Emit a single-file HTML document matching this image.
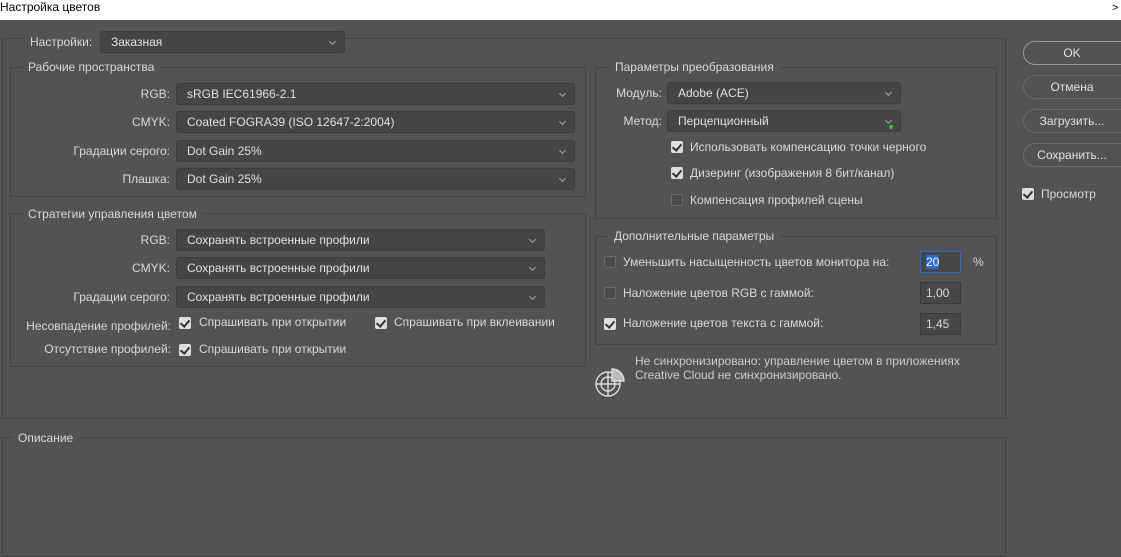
<!DOCTYPE html>
<html><head><meta charset="utf-8"><style>
*{box-sizing:border-box;margin:0;padding:0}
body{width:1121px;height:544px;background:#535353;position:relative;overflow:hidden;font-family:"Liberation Sans","DejaVu Sans",sans-serif;font-size:12px;color:#d8d8d8}
.a{position:absolute;white-space:nowrap}
.tb{position:absolute;left:0;top:0;width:1121px;height:20px;background:#fff;color:#000;font-size:12px;line-height:14px;padding-left:0}
.g{position:absolute;border:1px solid #444}
.gt{position:absolute;background:#535353;padding:0 6px;line-height:14px}
.dd{position:absolute;height:22px;background:#454545;border:1px solid #3c3c3c;border-radius:3px;line-height:20px;padding-left:10px;color:#e0e0e0}
.dd:after{content:"";position:absolute;right:9px;top:7px;width:4px;height:4px;border-right:1px solid #aaa;border-bottom:1px solid #aaa;transform:rotate(45deg)}
.lb{position:absolute;text-align:right;line-height:14px}
.cb{position:absolute;width:12px;height:12px;border-radius:2px;background:#ddd}
.cb:after{content:"";position:absolute;left:3px;top:1px;width:4px;height:7px;border-right:2px solid #333;border-bottom:2px solid #333;transform:rotate(40deg)}
.cb.o{background:#4a4a4a;border:1px solid #6a6a6a}
.cb.o:after{display:none}
.in{position:absolute;width:41px;height:22px;background:#474747;border:1px solid #3a3a3a;line-height:20px;padding-left:5px}
.bt{position:absolute;left:1023px;width:110px;height:24px;border:1px solid #6c6c6c;border-radius:12px;text-align:center;line-height:22px;padding-right:12px;color:#e0e0e0}
</style></head><body>
<div class="tb">Настройка цветов</div>
<div class="a" style="left:1112px;top:2px;color:#000;font-size:11px">&gt;</div>

<div class="g" style="left:2px;top:38px;width:1004px;height:381px"></div>
<div class="gt" style="left:24px;top:32px;width:321px;height:22px"></div>
<div class="a" style="left:30px;top:35px">Настройки:</div>
<div class="dd" style="left:100px;top:31px;width:245px">Заказная</div>

<div class="g" style="left:10px;top:67px;width:576px;height:130px"></div>
<div class="gt" style="left:22px;top:60px">Рабочие пространства</div>
<div class="lb" style="left:60px;width:110px;top:87px">RGB:</div>
<div class="dd" style="left:176px;top:83px;width:399px">sRGB IEC61966-2.1</div>
<div class="lb" style="left:60px;width:110px;top:115px">CMYK:</div>
<div class="dd" style="left:176px;top:111px;width:399px">Coated FOGRA39 (ISO 12647-2:2004)</div>
<div class="lb" style="left:40px;width:130px;top:144px">Градации серого:</div>
<div class="dd" style="left:176px;top:140px;width:399px">Dot Gain 25%</div>
<div class="lb" style="left:60px;width:110px;top:172px">Плашка:</div>
<div class="dd" style="left:176px;top:168px;width:399px">Dot Gain 25%</div>

<div class="g" style="left:10px;top:213px;width:576px;height:154px"></div>
<div class="gt" style="left:22px;top:207px">Стратегии управления цветом</div>
<div class="lb" style="left:40px;width:130px;top:233px">RGB:</div>
<div class="dd" style="left:176px;top:229px;width:369px">Сохранять встроенные профили</div>
<div class="lb" style="left:40px;width:130px;top:261px">CMYK:</div>
<div class="dd" style="left:176px;top:257px;width:369px">Сохранять встроенные профили</div>
<div class="lb" style="left:40px;width:130px;top:290px">Градации серого:</div>
<div class="dd" style="left:176px;top:286px;width:369px">Сохранять встроенные профили</div>
<div class="lb" style="left:0px;width:171px;top:319px">Несовпадение профилей:</div>
<div class="cb" style="left:179px;top:317px"></div>
<div class="a" style="left:199px;top:315px">Спрашивать при открытии</div>
<div class="cb" style="left:375px;top:317px"></div>
<div class="a" style="left:394px;top:315px">Спрашивать при вклеивании</div>
<div class="lb" style="left:0px;width:171px;top:342px">Отсутствие профилей:</div>
<div class="cb" style="left:179px;top:344px"></div>
<div class="a" style="left:199px;top:342px">Спрашивать при открытии</div>

<div class="g" style="left:595px;top:67px;width:402px;height:152px"></div>
<div class="gt" style="left:609px;top:60px">Параметры преобразования</div>
<div class="lb" style="left:600px;width:62px;top:86px">Модуль:</div>
<div class="dd" style="left:667px;top:82px;width:234px">Adobe (ACE)</div>
<div class="lb" style="left:600px;width:62px;top:114px">Метод:</div>
<div class="dd" style="left:667px;top:110px;width:234px">Перцепционный</div>
<div class="a" style="left:889px;top:125px;width:4px;height:4px;background:#3c3;border-radius:2px"></div>
<div class="cb" style="left:671px;top:141px"></div>
<div class="a" style="left:690px;top:140px">Использовать компенсацию точки черного</div>
<div class="cb" style="left:671px;top:167px"></div>
<div class="a" style="left:690px;top:166px">Дизеринг (изображения 8 бит/канал)</div>
<div class="cb o" style="left:671px;top:194px"></div>
<div class="a" style="left:690px;top:193px">Компенсация профилей сцены</div>

<div class="g" style="left:595px;top:236px;width:402px;height:109px"></div>
<div class="gt" style="left:608px;top:229px">Дополнительные параметры</div>
<div class="cb o" style="left:604px;top:256px"></div>
<div class="a" style="left:623px;top:255px">Уменьшить насыщенность цветов монитора на:</div>
<div class="in" style="left:920px;top:251px;border-color:#2a6ad6"><span style="background:#2a6ad6;color:#fff">20</span></div>
<div class="a" style="left:973px;top:255px">%</div>
<div class="cb o" style="left:604px;top:287px"></div>
<div class="a" style="left:623px;top:286px">Наложение цветов RGB с гаммой:</div>
<div class="in" style="left:920px;top:282px">1,00</div>
<div class="cb" style="left:604px;top:318px"></div>
<div class="a" style="left:623px;top:316px">Наложение цветов текста с гаммой:</div>
<div class="in" style="left:920px;top:313px">1,45</div>

<div class="a" style="left:635px;top:354px;line-height:14px;color:#ccc">Не синхронизировано: управление цветом в приложениях<br>Creative Cloud не синхронизировано.</div>
<svg class="a" style="left:594px;top:366px" width="32" height="32" viewBox="0 0 32 32" fill="none" stroke="#ddd" stroke-width="1.4">
<circle cx="14" cy="18" r="12"/><circle cx="14" cy="18" r="7"/><line x1="2" y1="18" x2="26" y2="18"/><line x1="14" y1="6" x2="14" y2="30"/>
<path d="M18 3 A12 12 0 0 1 30 15 L18 15 Z" fill="#bbb" stroke="#ddd"/></svg>

<div class="g" style="left:2px;top:437px;width:1004px;height:120px"></div>
<div class="gt" style="left:12px;top:431px">Описание</div>

<div class="bt" style="top:41px;border-color:#9a9a9a">OK</div>
<div class="bt" style="top:75px">Отмена</div>
<div class="bt" style="top:109px">Загрузить...</div>
<div class="bt" style="top:143px">Сохранить...</div>
<div class="cb" style="left:1022px;top:188px"></div>
<div class="a" style="left:1041px;top:187px">Просмотр</div>
</body></html>
